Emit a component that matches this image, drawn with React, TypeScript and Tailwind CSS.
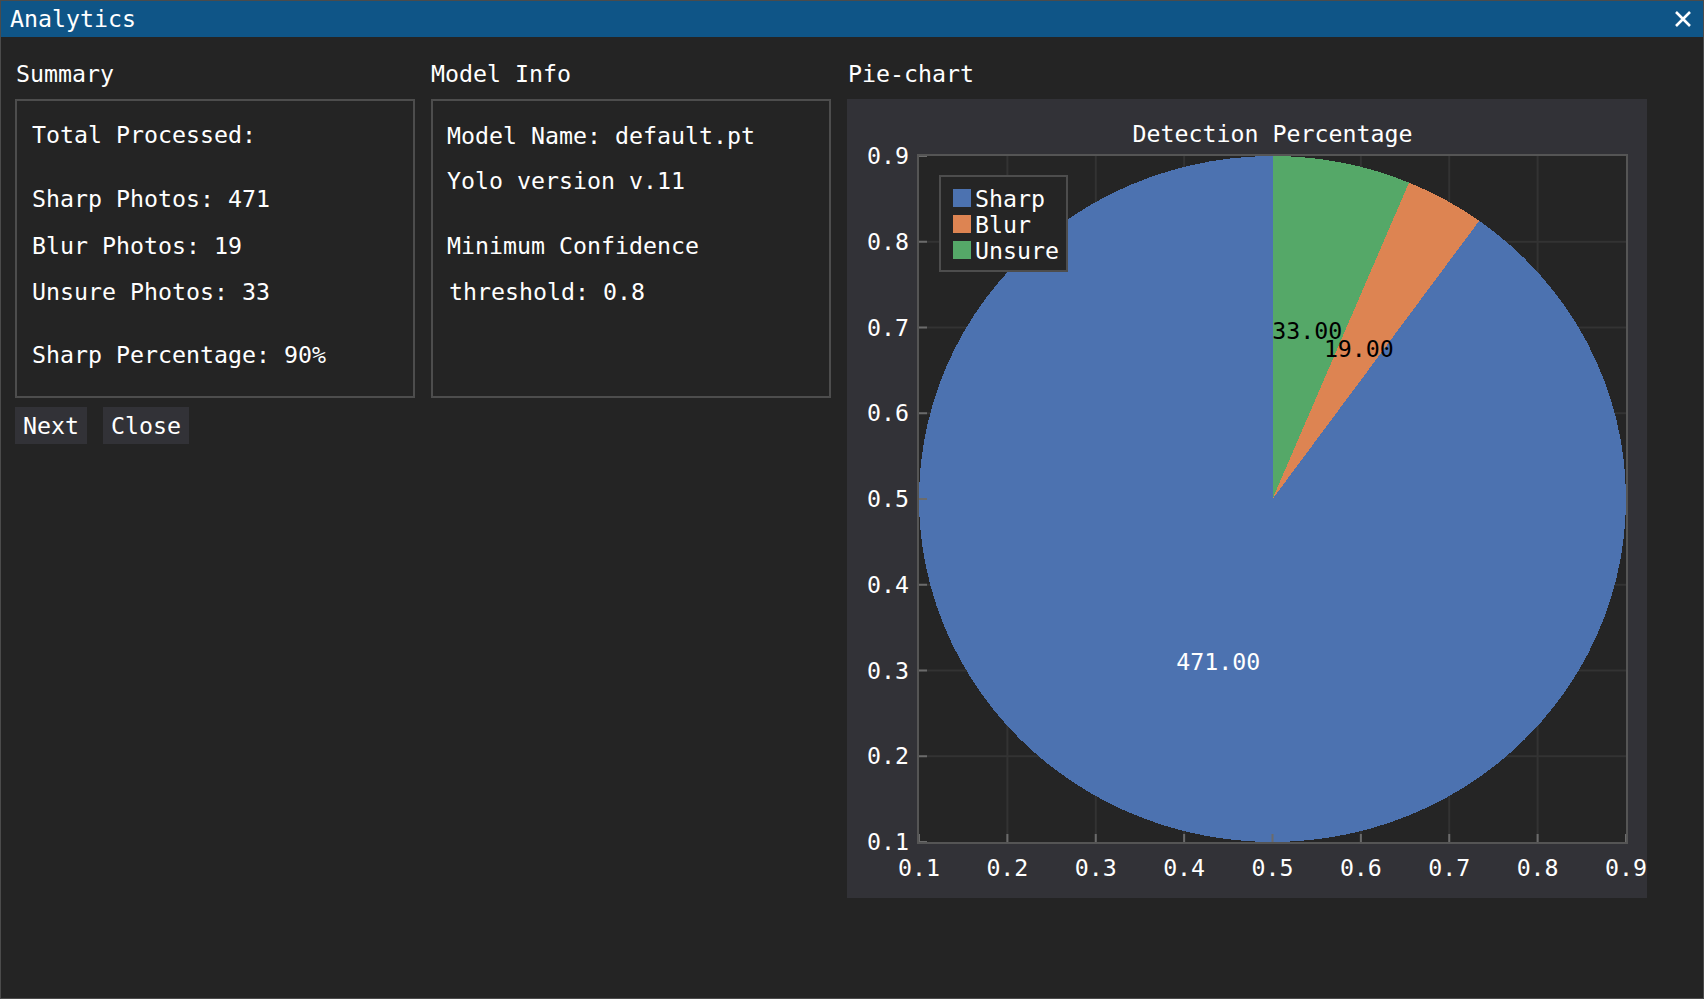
import React from 'react';

// pie data, ImPlot "Deep" colours
const slices = [
  { label: 'Sharp', value: 471, color: '#4c72b0', text: '#ffffff' },
  { label: 'Blur', value: 19, color: '#dd8452', text: '#000000' },
  { label: 'Unsure', value: 33, color: '#55a868', text: '#000000' },
];

// plot frame inside the chart svg
const L = 72;
const T = 57;
const R = 779;
const B = 743;
const ticks = [0.1, 0.2, 0.3, 0.4, 0.5, 0.6, 0.7, 0.8, 0.9];
const px = (v: number) => L + ((v - 0.1) / 0.8) * (R - L);
const py = (v: number) => B - ((v - 0.1) / 0.8) * (B - T);

const cx = px(0.5);
const cy = py(0.5);
const rx = px(0.9) - cx;
const ry = cy - py(0.9);

const pt = (deg: number, k = 1) => {
  const a = (deg * Math.PI) / 180;
  return [cx + k * rx * Math.cos(a), cy - k * ry * Math.sin(a)];
};

const PieChart = () => {
  const total = slices.reduce((s, d) => s + d.value, 0);
  let a0 = 90;
  const parts = slices.map((s) => {
    const span = (s.value / total) * 360;
    const a1 = a0 + span;
    const [x0, y0] = pt(a0);
    const [x1, y1] = pt(a1);
    const [lx, ly] = pt(a0 + span / 2, 0.5);
    const d = `M${cx},${cy} L${x0},${y0} A${rx},${ry} 0 ${span > 180 ? 1 : 0} 0 ${x1},${y1} Z`;
    a0 = a1;
    return { ...s, d, lx, ly };
  });

  return (
    <svg width={800} height={799} className="block font-['DejaVu_Sans_Mono',monospace]">
      <rect x={0} y={0} width={800} height={799} fill="#323237" />
      <text x={(L + R) / 2} y={43} fontSize={23.25} fill="#ffffff" textAnchor="middle">
        Detection Percentage
      </text>
      <rect x={L} y={T} width={R - L} height={B - T} fill="#252525" />
      {ticks.slice(1, -1).map((t) => (
        <g key={t}>
          <line x1={px(t)} y1={T} x2={px(t)} y2={B} stroke="#333333" strokeWidth={2} />
          <line x1={L} y1={py(t)} x2={R} y2={py(t)} stroke="#333333" strokeWidth={2} />
        </g>
      ))}
      {parts.map((p) => (
        <path key={p.label} d={p.d} fill={p.color} shapeRendering="crispEdges" />
      ))}
      {parts.map((p) => (
        <text key={p.label} x={p.lx} y={p.ly + 8} fontSize={23.25} fill={p.text} textAnchor="middle">
          {p.value.toFixed(2)}
        </text>
      ))}
      {ticks.map((t) => (
        <g key={t}>
          <line x1={px(t)} y1={B - 8} x2={px(t)} y2={B} stroke="#6b6b6b" strokeWidth={2} />
          <line x1={L} y1={py(t)} x2={L + 8} y2={py(t)} stroke="#6b6b6b" strokeWidth={2} />
          <text x={px(t)} y={777} fontSize={23.25} fill="#ffffff" textAnchor="middle">
            {t.toFixed(1)}
          </text>
          <text x={62} y={py(t) + 8} fontSize={23.25} fill="#ffffff" textAnchor="end">
            {t.toFixed(1)}
          </text>
        </g>
      ))}
      <rect x={L - 1} y={T - 1} width={R - L + 2} height={B - T + 2} fill="none" stroke="#555555" strokeWidth={2} />

      {/* Legend */}
      <rect x={93} y={77} width={127} height={95} fill="#252525" stroke="#4d4d4d" strokeWidth={2} />
      {slices.map((s, i) => (
        <g key={s.label}>
          <rect x={106} y={90 + i * 26} width={18} height={18} fill={s.color} />
          <text x={128} y={108 + i * 26} fontSize={23.25} fill="#ffffff">
            {s.label}
          </text>
        </g>
      ))}
    </svg>
  );
};

const App: React.FC = () => {
  return (
    <div className="w-[1704px] h-[999px] bg-[#242424] border border-[#4b4b4b] flex flex-col text-white font-['DejaVu_Sans_Mono',monospace] text-[23.25px] leading-[26px] overflow-hidden">
      {/* Title bar */}
      <div className="h-[36px] shrink-0 bg-[#0f5587] flex items-center justify-between pl-[9px] pr-[11px]">
        <span>Analytics</span>
        <svg width="18" height="18" viewBox="0 0 18 18">
          <path d="M2 2L16 16M16 2L2 16" stroke="#ffffff" strokeWidth="2.6" />
        </svg>
      </div>

      <div className="flex-1 flex items-start gap-[16px] pl-[14px] pt-[24px]">
        {/* Summary */}
        <div className="w-[400px] flex flex-col">
          <div className="pl-[1px]">Summary</div>
          <div className="mt-[12px] h-[299px] border-2 border-[#4d4d4d] pl-[15px] pt-[21px]">
            <div>Total Processed:</div>
            <div className="mt-[38px]">Sharp Photos: 471</div>
            <div className="mt-[21px]">Blur Photos: 19</div>
            <div className="mt-[20px]">Unsure Photos: 33</div>
            <div className="mt-[37px]">Sharp Percentage: 90%</div>
          </div>
          <div className="mt-[9px] flex gap-[16px]">
            <button className="h-[37px] px-[8px] bg-[#323237]">Next</button>
            <button className="h-[37px] px-[8px] bg-[#323237]">Close</button>
          </div>
        </div>

        {/* Model info */}
        <div className="w-[400px] flex flex-col">
          <div>Model Info</div>
          <div className="mt-[12px] h-[299px] border-2 border-[#4d4d4d] pl-[14px] pt-[22px]">
            <div>Model Name: default.pt</div>
            <div className="mt-[19px]">Yolo version v.11</div>
            <div className="mt-[39px]">Minimum Confidence</div>
            <div className="mt-[20px] pl-[2px]">threshold: 0.8</div>
          </div>
        </div>

        {/* Pie chart */}
        <div className="w-[800px] flex flex-col">
          <div className="pl-[1px]">Pie-chart</div>
          <div className="mt-[12px]">
            <PieChart />
          </div>
        </div>
      </div>
    </div>
  );
};

export default App;
